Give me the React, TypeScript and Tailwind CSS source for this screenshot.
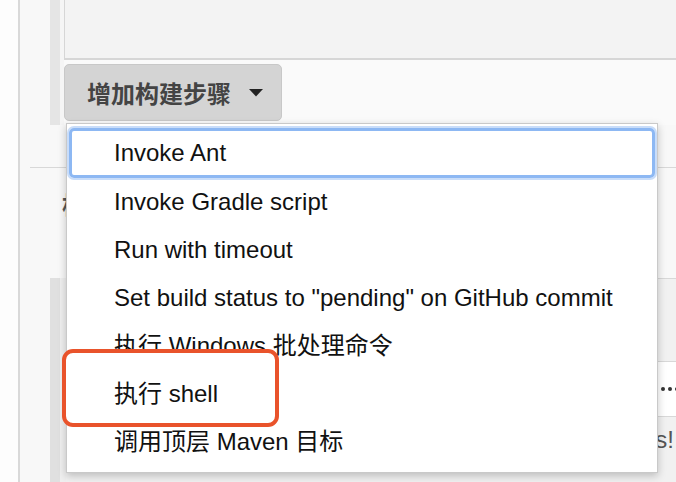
export default function App() {
  const items = [
    "Invoke Gradle script",
    "Run with timeout",
    'Set build status to "pending" on GitHub commit',
    "执行 Windows 批处理命令",
  ];
  return (
    <div className="relative w-[676px] h-[482px] overflow-hidden bg-white font-['Liberation_Sans','Noto_Sans_CJK_SC',sans-serif]">
      <div className="flex h-full">
        <div className="w-[18px] bg-[#fdfdfd]" />
        <div className="w-[2px] bg-[#d9d9d9]" />
        <div className="flex-1 flex flex-col bg-[#f8f8f8]">
          {/* row 1 */}
          <div className="h-[125px] flex">
            <div className="w-[30px]" />
            <div className="w-[10px] bg-[#e5e5e5]" />
            <div className="w-[4px] bg-[#f5f5f5]" />
            <div className="flex-1 flex flex-col bg-[#fafafa]">
              <div className="h-[60px] bg-[#f3f3f3] border-l border-b-2 border-[#d6d6d6]" />
              <div className="pt-[4px]">
                <div className="h-[57px] w-[218px] rounded-[5px] border border-[#c8c8c8] bg-[#d4d4d4] flex items-center pl-[22px] gap-[18px]">
                  <span className="text-[24px] font-bold text-[#444] font-['Noto_Sans_CJK_SC',sans-serif] leading-none">增加构建步骤</span>
                  <svg width="14" height="8" viewBox="0 0 14 8">
                    <polygon points="0,0 14,0 7,7.5" fill="#222" />
                  </svg>
                </div>
              </div>
            </div>
          </div>
          {/* row 2 */}
          <div className="h-[153px] flex flex-col">
            <div className="h-[42px]" />
            <div className="ml-[10px] h-[1px] bg-[#d8d8d8]" />
            <div className="pl-[42px] pt-[22px] text-[24px] font-bold text-[#555] leading-[28px] font-['Noto_Sans_CJK_SC',sans-serif]">
              构建后操作
            </div>
          </div>
          {/* row 3 */}
          <div className="flex-1 flex">
            <div className="w-[30px]" />
            <div className="w-[10px] bg-[#e0e0e0]" />
            <div className="w-[6px] bg-[#efefef]" />
            <div className="flex-1 flex flex-col border-t border-[#d8d8d8] bg-[#f1f1f1]">
              <div className="h-[82px]" />
              <div className="h-[56px] border-y border-[#d8d8d8] bg-white flex items-center justify-end gap-[3px] -mr-[3px]">
                {Array.from({ length: 30 }).map((_, i) => (
                  <span key={i} className="w-[4px] h-[4px] rounded-full bg-[#333]" />
                ))}
              </div>
              <div className="pt-[9px] text-right text-[24px] leading-[28px] text-[#555] pr-[2px]">Hello Jenkins!</div>
            </div>
          </div>
        </div>
      </div>

      {/* dropdown menu */}
      <div className="absolute left-[66px] top-[123px] w-[592px] h-[350px] border border-[#c9c9c9] bg-white shadow-[0_3px_8px_rgba(0,0,0,0.22)] pt-[4px] text-[24px] text-[#111]">
        <div className="h-[50px] mx-[2px] border-[3px] border-[#8db8f3] rounded-[5px] shadow-[0_0_0_2px_#c9ddf9] flex items-center pl-[42px]">
          Invoke Ant
        </div>
        {items.map((t) => (
          <div key={t} className="h-[48px] flex items-center pl-[47px] whitespace-nowrap">
            {t}
          </div>
        ))}
        <div className="relative z-20 h-[48px] flex items-center pl-[47px]">执行 shell</div>
        <div className="h-[48px] flex items-center pl-[47px]">调用顶层 Maven 目标</div>
      </div>

      {/* highlight */}
      <div className="absolute z-10 left-[62px] top-[349px] w-[217px] h-[78px] border-[4px] border-[#e9532b] rounded-[11px] bg-white" />
    </div>
  );
}
